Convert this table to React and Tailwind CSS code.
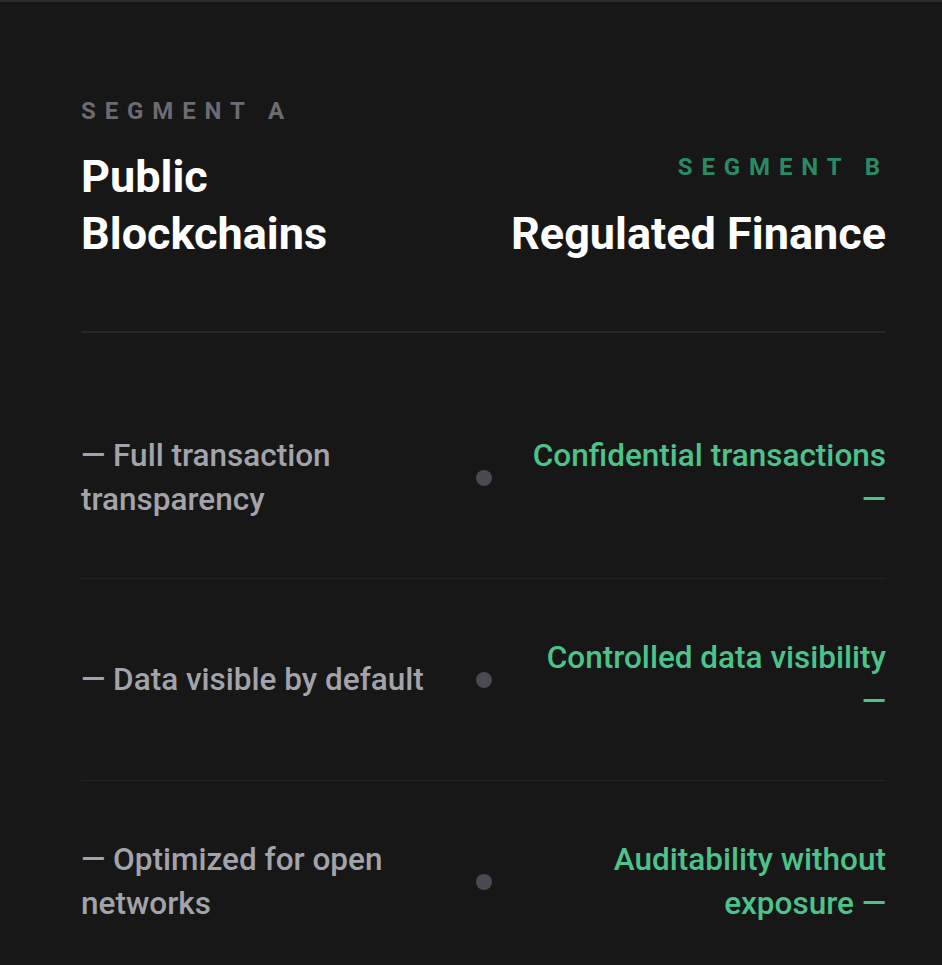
export default function App() {
  const rows = [
    ["— Full transaction transparency", "Confidential transactions —"],
    ["— Data visible by default", "Controlled data visibility —"],
    ["— Optimized for open networks", "Auditability without exposure —"],
  ];
  return (
    <div className="min-h-[965px] bg-[#171717] border-t-2 border-[#2a2a2e] pl-[81px] pr-[56px] pt-[89px]" style={{ fontFamily: "Roboto, 'Liberation Sans', sans-serif" }}>
      <div className="flex items-end justify-between pb-[69px] border-b-2 border-[#28282a]">
        <div>
          <div className="pt-[2px] text-[24px] font-bold tracking-[0.37em] text-[#6b6b72] leading-[36px]">SEGMENT A</div>
          <div className="mt-[19px] text-[45px] font-bold leading-[57px] text-white">Public<br />Blockchains</div>
        </div>
        <div className="text-right">
          <div className="text-[24px] font-bold tracking-[0.37em] text-[#2a8a65] leading-[36px] mr-[-3px]">SEGMENT B</div>
          <div className="mt-[20px] text-[45px] font-bold leading-[57px] text-white">Regulated Finance</div>
        </div>
      </div>
      <div className="pt-[44px]">
        {rows.map((r, i) => (
          <div key={i} className={"grid grid-cols-[1fr_auto_1fr] gap-8 items-center py-[56.5px] " + (i < 2 ? "border-b border-[#242426]" : "")}>
            <div className="text-[31.5px] font-medium leading-[44px] text-[#a3a3ab]">{r[0]}</div>
            <div className="w-4 h-4 rounded-full bg-[#4a4a52]" />
            <div className="text-[31.5px] font-medium leading-[44px] text-[#4cc38a] text-right">{r[1]}</div>
          </div>
        ))}
      </div>
    </div>
  );
}
